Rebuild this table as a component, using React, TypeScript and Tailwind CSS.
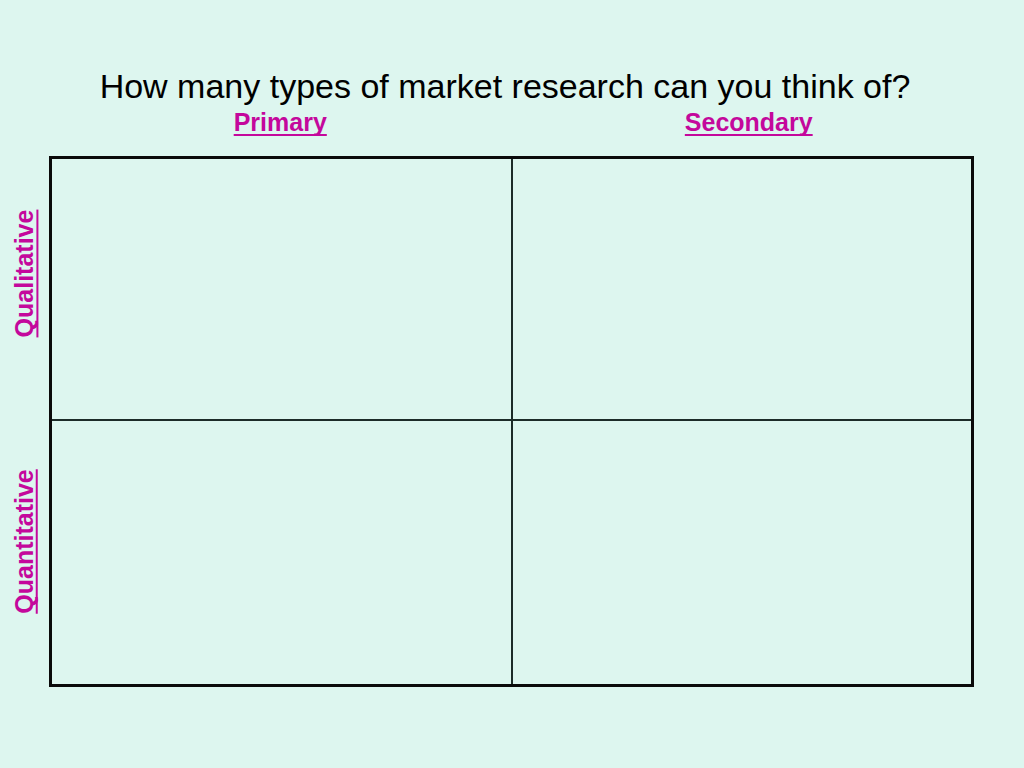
import React from 'react';

const labelClass = 'font-bold underline decoration-2 underline-offset-[3px] [text-decoration-skip-ink:none] text-[25px] leading-none text-[#c4089c] [font-family:"Liberation_Sans",Arial,sans-serif]';

export default function App() {
  return (
    <div className='w-[1024px] h-[768px] bg-[#ddf6ef] [font-family:"Liberation_Sans",Arial,sans-serif] text-black'>
      {/* Title */}
      <div className="pt-[69px] pr-[14px] text-center text-[34px] leading-none">
        How many types of market research can you think of?
      </div>

      {/* Column headings */}
      <div className="ml-[49px] w-[925px] mt-[7px] grid grid-cols-2">
        <div className="text-center">
          <span className={labelClass}>Primary</span>
        </div>
        <div className="text-center pl-[12px]">
          <span className={labelClass}>Secondary</span>
        </div>
      </div>

      {/* Row labels + grid */}
      <div className="flex mt-[18px]">
        <div className="w-[49px] h-[531px] flex flex-col">
          <div className="flex-1 flex items-center justify-center pb-[32px]">
            <span className={`${labelClass} -rotate-90 whitespace-nowrap`}>Qualitative</span>
          </div>
          <div className="flex-1 flex items-center justify-center pb-[28px]">
            <span className={`${labelClass} -rotate-90 whitespace-nowrap`}>Quantitative</span>
          </div>
        </div>
        <div className="w-[925px] h-[531px] border-[3px] border-[#0a0a0a] grid grid-cols-[461px_1fr] grid-rows-[262px_1fr]">
          <div className="border-r-2 border-b-2 border-[#1c2b28]" />
          <div className="border-b-2 border-[#1c2b28]" />
          <div className="border-r-2 border-[#1c2b28]" />
          <div />
        </div>
      </div>
    </div>
  );
}
